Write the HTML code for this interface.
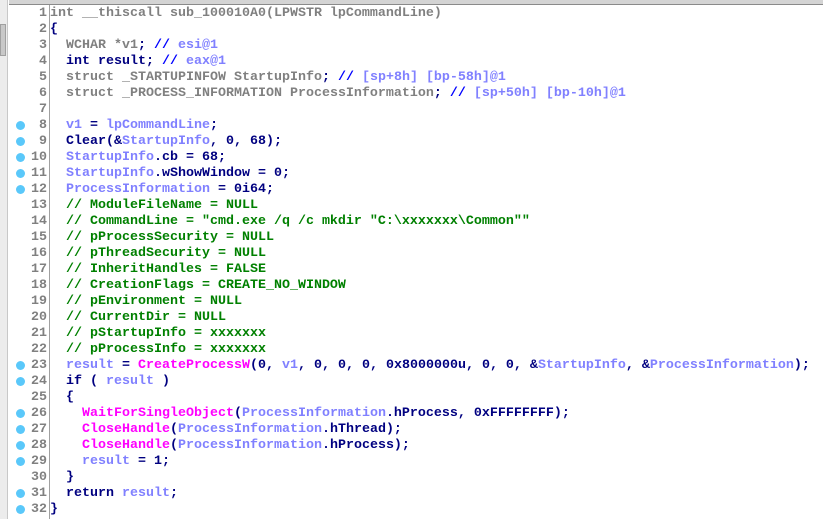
<!DOCTYPE html>
<html><head><meta charset="utf-8"><style>
html,body{margin:0;padding:0;background:#fff;width:823px;height:519px;overflow:hidden;position:relative}
.top{position:absolute;left:9px;top:0;width:814px;height:4px;background:#d4d4d4;border-bottom:1px solid #8a8a8a}
.sb{position:absolute;left:0;top:0;width:7px;height:519px;background:#ececec;border-right:1px solid #c8c8c8}
.thumb{position:absolute;left:0;top:24px;width:6px;height:32px;background:#c8c8c8;border:1px solid #a0a0a0;box-sizing:border-box}
.gl{position:absolute;left:49px;top:5px;width:1px;height:514px;background:#a0a0a0}
.ln{position:absolute;left:0;width:823px;height:16px;font-family:"Liberation Mono",monospace;font-size:13.33px;font-weight:bold;line-height:16px;white-space:pre;color:#808080}
.n{position:absolute;right:776px;top:1px;color:#808080}
.c{position:absolute;left:50px;top:1px}
.d{position:absolute;left:16px;top:4px;width:9px;height:9px;border-radius:50%;background:#5ac8fa}
.k{color:#000080}.v{color:#8080ff}.f{color:#ff00ff}.g{color:#008000}.b{color:#0000ff}.x{color:#808080}
</style></head><body>
<div class="sb"><div class="thumb"></div></div>
<div class="top"></div>
<div class="gl"></div>
<div class="ln" style="top:5px"><span class="n">1</span><span class="c x">int __thiscall sub_100010A0(LPWSTR lpCommandLine)</span></div>
<div class="ln" style="top:21px"><span class="n">2</span><span class="c k">{</span></div>
<div class="ln" style="top:37px"><span class="n">3</span><span class="c">  <span class="x">WCHAR *v1</span><span class="k">;</span> <span class="b">//</span> <span class="v">esi@1</span></span></div>
<div class="ln" style="top:53px"><span class="n">4</span><span class="c k">  int result; <span class="b">//</span> <span class="v">eax@1</span></span></div>
<div class="ln" style="top:69px"><span class="n">5</span><span class="c">  <span class="x">struct _STARTUPINFOW StartupInfo</span><span class="k">;</span> <span class="b">//</span> <span class="v">[sp+8h] [bp-58h]@1</span></span></div>
<div class="ln" style="top:85px"><span class="n">6</span><span class="c">  <span class="x">struct _PROCESS_INFORMATION ProcessInformation</span><span class="k">;</span> <span class="b">//</span> <span class="v">[sp+50h] [bp-10h]@1</span></span></div>
<div class="ln" style="top:101px"><span class="n">7</span></div>
<div class="ln" style="top:117px"><span class="d"></span><span class="n">8</span><span class="c k">  <span class="v">v1</span> = <span class="v">lpCommandLine</span>;</span></div>
<div class="ln" style="top:133px"><span class="d"></span><span class="n">9</span><span class="c k">  Clear(&amp;<span class="v">StartupInfo</span>, 0, 68);</span></div>
<div class="ln" style="top:149px"><span class="d"></span><span class="n">10</span><span class="c k">  <span class="v">StartupInfo</span>.cb = 68;</span></div>
<div class="ln" style="top:165px"><span class="d"></span><span class="n">11</span><span class="c k">  <span class="v">StartupInfo</span>.wShowWindow = 0;</span></div>
<div class="ln" style="top:181px"><span class="d"></span><span class="n">12</span><span class="c k">  <span class="v">ProcessInformation</span> = 0i64;</span></div>
<div class="ln" style="top:197px"><span class="n">13</span><span class="c g">  // ModuleFileName = NULL</span></div>
<div class="ln" style="top:213px"><span class="n">14</span><span class="c g">  // CommandLine = "cmd.exe /q /c mkdir "C:\xxxxxxx\Common""</span></div>
<div class="ln" style="top:229px"><span class="n">15</span><span class="c g">  // pProcessSecurity = NULL</span></div>
<div class="ln" style="top:245px"><span class="n">16</span><span class="c g">  // pThreadSecurity = NULL</span></div>
<div class="ln" style="top:261px"><span class="n">17</span><span class="c g">  // InheritHandles = FALSE</span></div>
<div class="ln" style="top:277px"><span class="n">18</span><span class="c g">  // CreationFlags = CREATE_NO_WINDOW</span></div>
<div class="ln" style="top:293px"><span class="n">19</span><span class="c g">  // pEnvironment = NULL</span></div>
<div class="ln" style="top:309px"><span class="n">20</span><span class="c g">  // CurrentDir = NULL</span></div>
<div class="ln" style="top:325px"><span class="n">21</span><span class="c g">  // pStartupInfo = xxxxxxx</span></div>
<div class="ln" style="top:341px"><span class="n">22</span><span class="c g">  // pProcessInfo = xxxxxxx</span></div>
<div class="ln" style="top:357px"><span class="d"></span><span class="n">23</span><span class="c k">  <span class="v">result</span> = <span class="f">CreateProcessW</span>(0, <span class="v">v1</span>, 0, 0, 0, 0x8000000u, 0, 0, &amp;<span class="v">StartupInfo</span>, &amp;<span class="v">ProcessInformation</span>);</span></div>
<div class="ln" style="top:373px"><span class="d"></span><span class="n">24</span><span class="c k">  if ( <span class="v">result</span> )</span></div>
<div class="ln" style="top:389px"><span class="n">25</span><span class="c k">  {</span></div>
<div class="ln" style="top:405px"><span class="d"></span><span class="n">26</span><span class="c k">    <span class="f">WaitForSingleObject</span>(<span class="v">ProcessInformation</span>.hProcess, 0xFFFFFFFF);</span></div>
<div class="ln" style="top:421px"><span class="d"></span><span class="n">27</span><span class="c k">    <span class="f">CloseHandle</span>(<span class="v">ProcessInformation</span>.hThread);</span></div>
<div class="ln" style="top:437px"><span class="d"></span><span class="n">28</span><span class="c k">    <span class="f">CloseHandle</span>(<span class="v">ProcessInformation</span>.hProcess);</span></div>
<div class="ln" style="top:453px"><span class="d"></span><span class="n">29</span><span class="c k">    <span class="v">result</span> = 1;</span></div>
<div class="ln" style="top:469px"><span class="n">30</span><span class="c k">  }</span></div>
<div class="ln" style="top:485px"><span class="d"></span><span class="n">31</span><span class="c k">  return <span class="v">result</span>;</span></div>
<div class="ln" style="top:501px"><span class="d"></span><span class="n">32</span><span class="c k">}</span></div>
</body></html>
